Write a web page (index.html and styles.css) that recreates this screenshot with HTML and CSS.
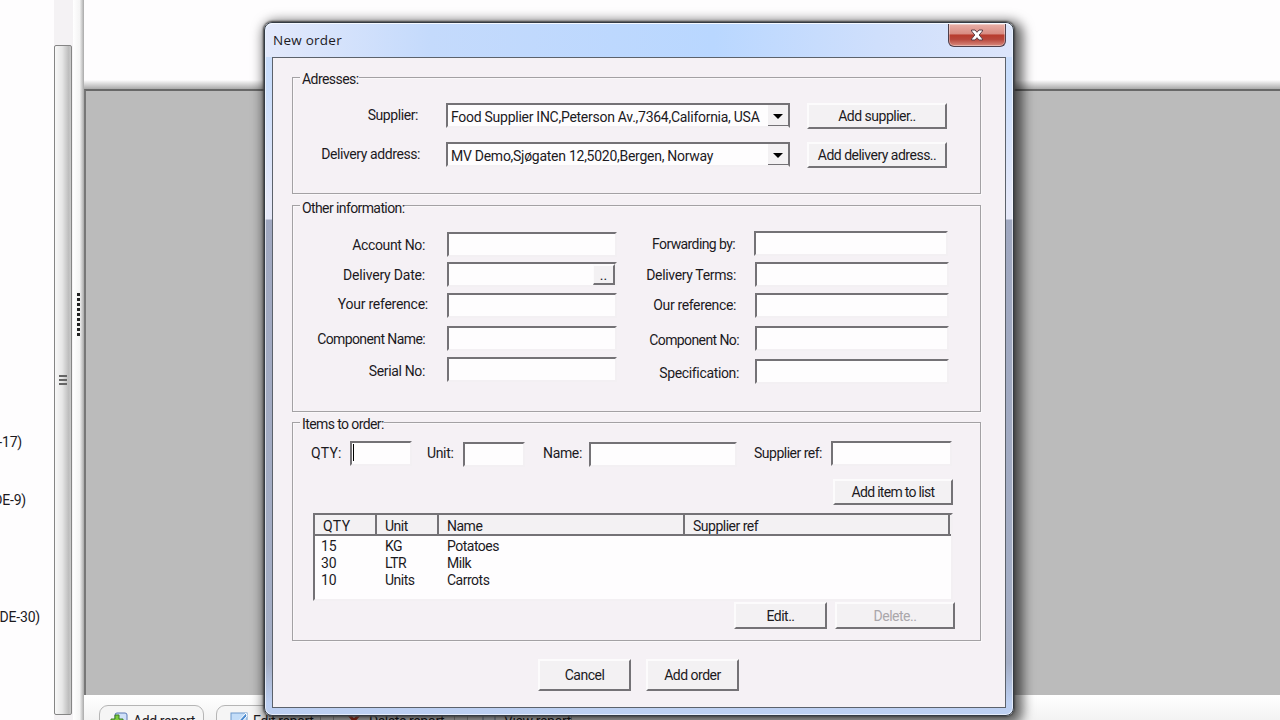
FILE: index.html
```html
<!DOCTYPE html>
<html lang="en">
<head>
    <meta charset="UTF-8">
    <meta name="viewport" content="width=device-width, initial-scale=1.0">
    <title>New order</title>
    <link rel="stylesheet" href="styles.css">
</head>
<body>

    <!-- Main window -->
    <div class="app">
        <aside class="tree">
            <span class="tree-item first">-17)</span>
            <span class="tree-item second">DE-9)</span>
            <span class="tree-item third">DE-30)</span>
        </aside>
        <div class="scrollbar">
            <div class="thumb"><i></i><i></i><i></i></div>
        </div>
        <div class="splitter">
            <div class="grip"></div>
        </div>
        <main class="content">
            <div class="content-top"></div>
            <div class="workspace"></div>
            <div class="toolbar">
                <button class="tool add">
                    <svg width="18" height="18" viewBox="0 0 18 18"><rect x="5" y="1" width="12" height="15" rx="2" fill="#cfe0f8" stroke="#5b79b5"/><path d="M5 3h4v4h4v4H9v4H5v-4H1V7h4z" fill="#7ccb3c" stroke="#3c7d22"/></svg>
                    Add report
                </button>
                <button class="tool edit">
                    <svg width="18" height="18" viewBox="0 0 18 18"><rect x="1" y="1" width="16" height="16" fill="#c3ddf8" stroke="#6f9acb"/><path d="M16 1L5 13l-1 3 3-1L17 4z" fill="#4b8bd0" stroke="#fff"/></svg>
                    Edit report
                </button>
                <button class="tool delete">
                    <svg width="18" height="18" viewBox="0 0 18 18"><path d="M3 3l10 11M13 3L3 14" stroke="#c8391f" stroke-width="3"/></svg>
                    Delete report
                </button>
                <button class="tool view">
                    <svg width="18" height="18" viewBox="0 0 18 18"><rect x="2" y="3" width="12" height="14" fill="#eef3fa" stroke="#7c8ea8"/></svg>
                    View report
                </button>
            </div>
        </main>
    </div>

    <!-- New order dialog -->
    <div class="dialog">
        <div class="titlebar">
            <h1>New order</h1>
            <button class="close" aria-label="Close">
                <svg width="14" height="12" viewBox="0 0 14 12"><path d="M1.500 1h3.500l2 2.300L9 1h3.500v1L9.200 6l3.300 4v1H9L7 8.700 5 11H1.500v-1l3.300-4-3.300-4z" fill="#fff" stroke="#5d3f48"/></svg>
            </button>
        </div>
        <form class="client">

            <section class="group addresses">
                <h2>Adresses:</h2>
                <div class="address-row">
                    <label>Supplier:</label>
                    <div class="combo"><span>Food Supplier INC,Peterson Av.,7364,California, USA</span><b></b></div>
                    <button type="button">Add supplier..</button>
                </div>
                <div class="address-row">
                    <label>Delivery address:</label>
                    <div class="combo"><span>MV Demo,Sjøgaten 12,5020,Bergen, Norway</span><b></b></div>
                    <button type="button">Add delivery adress..</button>
                </div>
            </section>

            <section class="group info">
                <h2 class="tight">Other information:</h2>
                <div class="columns">
                    <div class="column left">
                        <div class="row"><label>Account No:</label><div class="field"></div></div>
                        <div class="row"><label>Delivery Date:</label><div class="field"><button type="button" class="pick">..</button></div></div>
                        <div class="row"><label>Your reference:</label><div class="field"></div></div>
                        <div class="row"><label class="tight">Component Name:</label><div class="field"></div></div>
                        <div class="row"><label>Serial No:</label><div class="field"></div></div>
                    </div>
                    <div class="column right">
                        <div class="row"><label class="tight">Forwarding by:</label><div class="field"></div></div>
                        <div class="row"><label>Delivery Terms:</label><div class="field"></div></div>
                        <div class="row"><label>Our reference:</label><div class="field"></div></div>
                        <div class="row"><label class="tight">Component No:</label><div class="field"></div></div>
                        <div class="row"><label>Specification:</label><div class="field"></div></div>
                    </div>
                </div>
            </section>

            <section class="group items">
                <h2 class="tight">Items to order:</h2>
                <div class="entry">
                    <label class="l-qty">QTY:</label><div class="field f-qty"><i class="caret"></i></div>
                    <label class="l-unit">Unit:</label><div class="field f-unit"></div>
                    <label class="l-name">Name:</label><div class="field f-name"></div>
                    <label class="l-ref">Supplier ref:</label><div class="field f-ref"></div>
                </div>
                <div class="add-row"><button type="button">Add item to list</button></div>
                <div class="list">
                    <div class="list-row list-head"><span>QTY</span><span>Unit</span><span>Name</span><span>Supplier ref</span></div>
                    <div class="list-row"><span>15</span><span>KG</span><span>Potatoes</span></div>
                    <div class="list-row"><span>30</span><span>LTR</span><span>Milk</span></div>
                    <div class="list-row"><span>10</span><span>Units</span><span>Carrots</span></div>
                </div>
                <div class="list-actions">
                    <button type="button" class="b-edit">Edit..</button>
                    <button type="button" class="b-delete" disabled>Delete..</button>
                </div>
            </section>

            <div class="actions">
                <button type="button">Cancel</button>
                <button type="button">Add order</button>
            </div>
        </form>
    </div>

</body>
</html>
```
FILE: styles.css
```css
* {
    margin: 0;
    padding: 0;
    box-sizing: border-box;
}

body {
    width: 1280px;
    height: 720px;
    overflow: hidden;
    position: relative;
    background: #fefdfe;
    color: #1c1a1e;
    font-family: Roboto, "Liberation Sans", sans-serif;
    font-size: 14px;
    line-height: 16px;
    white-space: nowrap;
}

button {
    font: inherit;
    color: inherit;
}

/* Main window */
.app {
    display: flex;
    height: 720px;
}

.tree {
    width: 54px;
    overflow: hidden;
    letter-spacing: -0.2px;
}

.tree-item {
    display: flex;
    justify-content: flex-end;
    width: 22px;
}

.first {
    margin-top: 434px;
}

.second {
    margin-top: 42px;
    width: 26px;
}

.third {
    margin-top: 101px;
    width: 40px;
}

.scrollbar {
    width: 19px;
    padding: 45px 1px 0 0;
    background: #f4f2f4;
}

.thumb {
    display: flex;
    flex-direction: column;
    align-items: center;
    justify-content: center;
    gap: 2px;
    height: 670px;
    border: 1px solid #858585;
    border-radius: 2px;
    background: linear-gradient(90deg, #f8f8f8, #e6e6e6 45%, #bdbdbd 85%, #c9c9c9);
}

.thumb i {
    width: 8px;
    height: 2px;
    background: #666;
}

.splitter {
    width: 11px;
    padding: 293px 0 0 4px;
    background: linear-gradient(90deg, #fff, #f4f4f4 60%, #a9a9a9);
}

.grip {
    width: 3px;
    height: 43px;
    background: repeating-linear-gradient(#222 0 3px, #f4f4f4 3px 5px);
}

.content {
    display: flex;
    flex-direction: column;
    flex: 1;
}

.content-top {
    height: 89px;
    background: linear-gradient(#fefdfe 80px, #aaa 89px);
}

.workspace {
    height: 606px;
    border-top: 2px solid #686868;
    border-left: 2px solid #777;
    background: #bbb;
}

.toolbar {
    display: flex;
    gap: 12px;
    height: 25px;
    padding: 10px 0 0 15px;
    overflow: hidden;
    background: linear-gradient(#fff, #f3f3f3);
}

.tool {
    display: flex;
    align-items: center;
    gap: 5px;
    height: 31px;
    width: 105px;
    padding-left: 10px;
    border: 1px solid #b5b5b5;
    border-radius: 9px;
    background: #f5f5f5;
    flex-shrink: 0;
    letter-spacing: -0.4px;
}

.tool.edit,
.tool.view {
    padding-left: 13px;
}

.tool.delete {
    width: 122px;
    padding-left: 12px;
}

/* Dialog frame */
.dialog {
    position: absolute;
    left: 264px;
    top: 22px;
    width: 750px;
    height: 694px;
    border: 1px solid #343b44;
    border-radius: 8px;
    padding: 0 7px 7px;
    background: linear-gradient(#c9ddfb 60px, #e5e8f8 180px, #e5e8f8 196px, #a0a8c0 197px, #a4aec5 640px, #bdd0f2 680px);
    box-shadow: inset 0 0 0 1px rgba(255, 255, 255, 0.6), 0 0 2px 1px #444, 4px 4px 12px 5px rgba(0, 0, 0, 0.6);
}

.titlebar {
    display: flex;
    justify-content: space-between;
    height: 34px;
    margin: 0 -6px;
    padding: 0 6px 0 7px;
    border-radius: 7px 7px 0 0;
    border-top: 1px solid #f4f8ff;
    background: linear-gradient(90deg, #e3e9fb, #c4dafc 22%, #b9d7ff 60%, #cfdffc 82%, #dce5fb);
}

.titlebar h1 {
    margin-top: 7px;
    font-family: "Open Sans", "Noto Sans", sans-serif;
    font-size: 13.500px;
    font-weight: 400;
    line-height: 18px;
    letter-spacing: 0.25px;
}

.close {
    display: flex;
    align-items: center;
    justify-content: center;
    width: 58px;
    height: 23px;
    border: 1px solid #4f3f4b;
    border-top: 0;
    border-radius: 0 0 6px 6px;
    background: linear-gradient(#e9b0a8, #d88b82 45%, #b83c2e 50%, #b8473c 70%, #d98b7f);
    box-shadow: inset 0 0 0 1px rgba(255, 255, 255, 0.35);
}

.client {
    height: 651px;
    border: 1px solid #5c626b;
    background: #f5f1f5;
    padding: 19px 23px 0 19px;
    letter-spacing: -0.35px;
}

/* Group boxes */
.group {
    width: 689px;
    border: 1px solid #a3a1a4;
    box-shadow: 1px 1px 0 #faf8fa, inset 1px 1px 0 #faf8fa;
}

.group h2 {
    width: max-content;
    height: 16px;
    margin: -7px 0 0 7px;
    padding: 0 0 0 2px;
    font-size: 14px;
    font-weight: 400;
    line-height: 16px;
    background: #f5f1f5;
}

.client .tight {
    letter-spacing: -0.6px;
}

.client button {
    border: 2px solid;
    border-color: #fcfbfc #747276 #747276 #fcfbfc;
    background: #f3f1f3;
    letter-spacing: -0.5px;
    text-align: center;
}

.field,
.combo {
    border: 2px solid;
    border-color: #747276 #f3f0f3 #f3f0f3 #747276;
    background: #fefdfe;
}

.addresses {
    height: 117px;
}

.addresses h2 {
    margin-bottom: 16px;
    letter-spacing: -0.55px;
}

.address-row {
    display: grid;
    grid-template-columns: 125px 344px 140px;
    column-gap: 17px;
    height: 26px;
    margin-bottom: 13px;
}

.address-row label {
    padding-top: 4px;
    text-align: right;
    letter-spacing: -0.42px;
}

.address-row:nth-child(3) label {
    margin-right: -2px;
}

.address-row .combo,
.address-row button {
    margin-left: 11px;
    margin-right: -11px;
}

.combo {
    display: flex;
    justify-content: space-between;
    height: 25px;
    padding-left: 3px;
    border-right-color: #747276;
    letter-spacing: -0.27px;
}

.combo span {
    padding-top: 4px;
}

.combo b {
    display: flex;
    align-items: center;
    justify-content: center;
    width: 20px;
    height: 21px;
    padding-top: 2px;
    background: #f3f1f3;
    border-bottom: 1px solid #747276;
}

.combo b::before {
    content: "";
    border: 5px solid transparent;
    border-top-color: #000;
    border-bottom: 0;
}

/* Other information */
.info {
    height: 207px;
    margin-top: 11px;
}

.info h2 {
    margin-top: -6px;
}

.columns {
    display: flex;
}

.column {
    padding-top: 16px;
}

.right {
    padding-top: 15px;
}

.row {
    display: flex;
    height: 25px;
    margin-bottom: 6px;
}

.row label {
    width: 154px;
    padding: 5px 22px 0 0;
    text-align: right;
}

.row .field {
    display: flex;
    justify-content: flex-end;
    width: 170px;
}

.right .row label {
    width: 138px;
    padding-right: 19px;
}

.right .row .field {
    width: 194px;
}

.left .row:nth-child(1) {
    margin-bottom: 5px;
}

.left .row:nth-child(2) label {
    letter-spacing: -0.2px;
}

.left .row:nth-child(3) label {
    padding: 3px 19px 0 0;
    letter-spacing: -0.25px;
}

.left .row:nth-child(3),
.right .row:nth-child(3) {
    margin-bottom: 8px;
}

.right .row:nth-child(1) {
    margin-left: -1px;
    margin-bottom: 6px;
}

.right .row:nth-child(3) label {
    padding-top: 4px;
}

.right .row:nth-child(4) {
    margin-bottom: 8px;
}

.right .row:nth-child(n+4) label {
    padding: 6px 16px 0 0;
}

.left .row:nth-child(5) label {
    padding-top: 6px;
}

.client .pick {
    width: 22px;
    height: 21px;
    border-left-width: 1px;
    line-height: 16px;
    letter-spacing: 0;
}

/* Items to order */
.items {
    height: 219px;
    margin-top: 10px;
}

.entry {
    display: flex;
    padding: 9px 0 0 18px;
}

.entry .field {
    height: 25px;
    flex-shrink: 0;
}

.entry label {
    flex-shrink: 0;
    padding-top: 4px;
}

.l-qty {
    width: 39px;
    letter-spacing: 0.3px;
}

.f-qty {
    width: 62px;
    padding: 1px 0 0 1px;
}

.caret {
    display: block;
    width: 1px;
    height: 17px;
    background: #000;
}

.l-unit {
    width: 51px;
    padding-left: 15px;
}

.f-unit {
    width: 62px;
    margin-top: 1px;
}

.l-name {
    width: 64px;
    padding-left: 18px;
}

.f-name {
    width: 148px;
    margin-top: 1px;
}

.l-ref {
    width: 94px;
    padding-left: 17px;
    letter-spacing: -0.5px;
}

.f-ref {
    width: 121px;
}

.add-row {
    display: flex;
    justify-content: flex-end;
    padding: 12px 27px 8px 0;
}

.add-row button {
    width: 120px;
    height: 26px;
    letter-spacing: -0.7px;
}

.list {
    width: 640px;
    height: 88px;
    margin-left: 20px;
    border: 2px solid;
    border-color: #747276 #f3f0f3 #f3f0f3 #747276;
    background: #fefdfe;
    letter-spacing: -0.5px;
}

.list-row {
    display: grid;
    grid-template-columns: 62px 62px 246px 265px;
    height: 17px;
    line-height: 17px;
}

.list-row span {
    padding-left: 8px;
}

.list-row span:first-child {
    padding-left: 6px;
    letter-spacing: -0.2px;
}

.list-head {
    height: 21px;
    margin-bottom: 2px;
    border-bottom: 2px solid #747276;
    background: #f3f1f3;
    line-height: 22px;
}

.list-head span {
    height: 19px;
    border-right: 2px solid #747276;
}

.list-head span:first-child {
    padding-left: 8px;
    letter-spacing: 0.5px;
}

.list-actions {
    display: flex;
    justify-content: flex-end;
    gap: 8px;
    padding: 1px 25px 0 0;
}

.list-actions button {
    height: 27px;
}

.b-edit {
    width: 93px;
}

.b-delete {
    width: 120px;
}

.client .b-delete {
    color: #aaa7ab;
}

.actions {
    display: flex;
    gap: 15px;
    padding: 18px 0 0 246px;
}

.actions button {
    width: 93px;
    height: 32px;
}
```
